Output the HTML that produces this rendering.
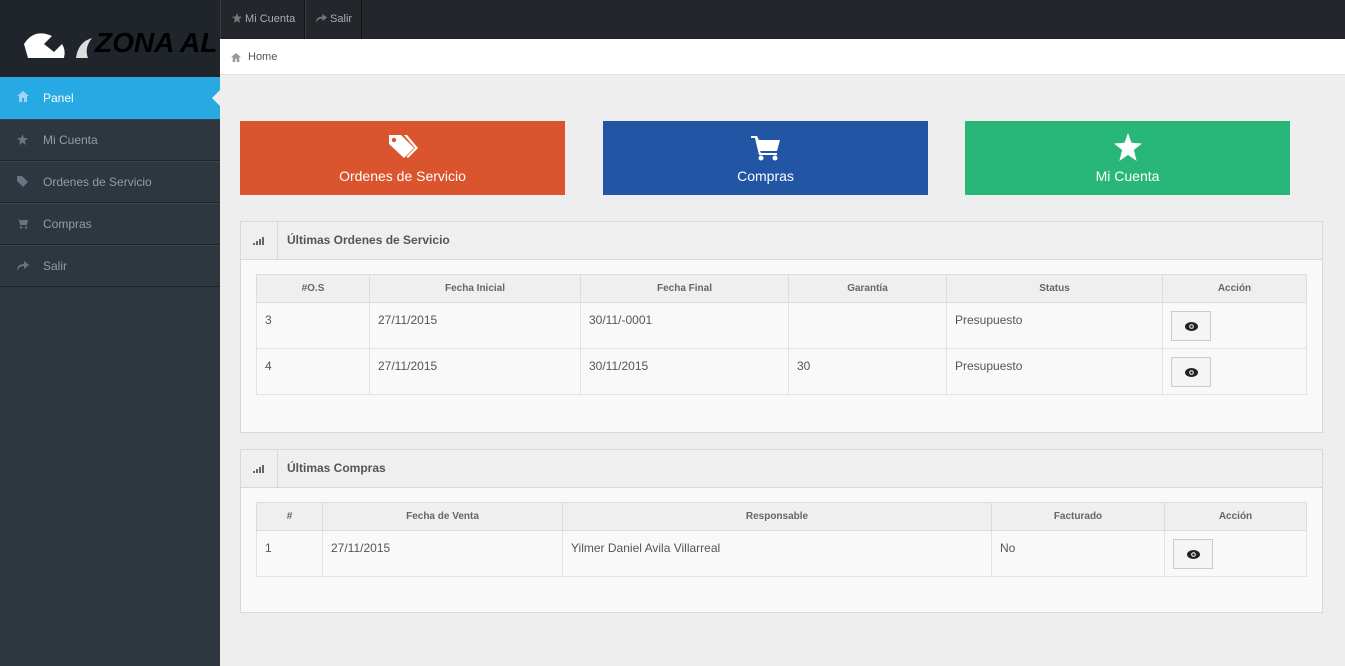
<!DOCTYPE html>
<html><head><meta charset="utf-8">
<style>
*{box-sizing:border-box;margin:0;padding:0}
body{width:1345px;height:666px;overflow:hidden;background:#eeeeee;font-family:"Liberation Sans",sans-serif;font-size:12px;color:#555;position:relative}
.abs{position:absolute}
#side{left:0;top:0;width:220px;height:666px;background:#2e363f}
#logo{left:0;top:0;width:220px;height:77px;background:#1f252b;overflow:hidden}
.nav{left:0;width:220px;height:42px;border-bottom:1px solid #1f252b;border-top:1px solid #3a434c;color:#939da8;font-size:12px;line-height:40px;padding-left:43px}
.nav svg{position:absolute;left:17px;top:14px}
#topbar{left:220px;top:0;width:1125px;height:39px;background:#23272c}
.tb{top:0;height:39px;line-height:38px;color:#aab;font-size:11px;border-right:1px solid #111;border-left:1px solid #3a3e44}
#crumb{left:220px;top:39px;width:1125px;height:36px;background:#fff;border-bottom:1px solid #e2e2e2;line-height:36px;padding-left:28px;font-size:11px;color:#555}
.tile{top:121px;width:325px;height:74px;color:#fff;font-size:14px;text-align:center}
.tile span{position:absolute;left:0;right:0;top:47px}
.tile svg{position:absolute;left:50%;top:12px;transform:translateX(-50%)}
.panel{left:240px;width:1083px;background:#f9f9f9;border:1px solid #d8d8d8}
.ph{height:38px;background:#efefef;border-bottom:1px solid #d8d8d8;position:relative;font-weight:bold;color:#555;font-size:12px;line-height:37px;padding-left:46px}
.ph i{position:absolute;left:0;top:0;width:37px;height:37px;border-right:1px solid #d8d8d8}
table{position:absolute;left:15px;border-collapse:collapse;background:#f9f9f9;font-size:12px}
th{height:28px;padding:0;background:#efefef;border:1px solid #ddd;font-size:10px;color:#666;font-weight:bold}
td{height:46px;border:1px solid #e2e2e2;vertical-align:top;padding:10px 8px 0;color:#555}
.btn{width:40px;height:30px;border:1px solid #ccc;background:#f5f5f5;margin-top:-2px;position:relative}
.btn svg{position:absolute;left:13px;top:10px}
</style></head><body>
<div id="side" class="abs"></div>
<div id="logo" class="abs">
<svg width="220" height="77" style="position:absolute;left:0;top:0">
<path d="M24 44 Q34 28 52 36 L44 44 L54 52 L62 44 Q66 50 64 58 L28 58 Z" fill="#fff"/>
<path d="M76 58 Q78 42 92 38 Q84 48 88 58 Z" fill="#ddd"/>
<text x="95" y="52" font-family="Liberation Sans" font-weight="bold" font-style="italic" font-size="28" fill="#000">ZONA AL</text>
</svg></div>
<div class="abs nav" style="top:77px;background:#27a9e3;color:#fff;border:none;line-height:42px">Panel
<svg width="12" height="11" viewBox="0 0 12 11"><path d="M6 0 L12 5 L10 5 L10 11 L7 11 L7 7 L5 7 L5 11 L2 11 L2 5 L0 5Z" fill="#9cd6f2"/></svg></div>
<div class="abs" style="left:212px;top:90px;width:0;height:0;border-top:8px solid transparent;border-bottom:8px solid transparent;border-right:8px solid #eee"></div>
<div class="abs nav" style="top:119px">Mi Cuenta<svg width="11" height="11" viewBox="0 0 12 12"><path d="M6 0 L7.5 4.2 L12 4.5 L8.5 7.3 L9.7 12 L6 9.4 L2.3 12 L3.5 7.3 L0 4.5 L4.5 4.2Z" fill="#6a7480"/></svg></div>
<div class="abs nav" style="top:161px">Ordenes de Servicio<svg width="12" height="11" viewBox="0 0 12 11"><path d="M0 0 L5 0 L11 6 L6 11 L0 5Z" fill="#6a7480"/></svg></div>
<div class="abs nav" style="top:203px">Compras<svg width="12" height="11" viewBox="0 0 12 11"><path d="M0 1 L2 1 L3 7 L10 7 L11 2 L3 2" fill="#6a7480"/><circle cx="4" cy="9.5" r="1.2" fill="#6a7480"/><circle cx="9" cy="9.5" r="1.2" fill="#6a7480"/></svg></div>
<div class="abs nav" style="top:245px">Salir<svg width="12" height="11" viewBox="0 0 12 11"><path d="M0 11 Q0 4 7 4 L7 1 L12 5 L7 9 L7 6 Q2 6 0 11Z" fill="#6a7480"/></svg></div>

<div id="topbar" class="abs"></div>
<div class="abs tb" style="left:220px;width:85px;padding-left:11px"><svg width="10" height="10" viewBox="0 0 12 12" style="vertical-align:-1px"><path d="M6 0 L7.5 4.2 L12 4.5 L8.5 7.3 L9.7 12 L6 9.4 L2.3 12 L3.5 7.3 L0 4.5 L4.5 4.2Z" fill="#777"/></svg> Mi Cuenta</div>
<div class="abs tb" style="left:305px;width:57px;padding-left:10px"><svg width="11" height="10" viewBox="0 0 12 11" style="vertical-align:-1px"><path d="M0 11 Q0 4 7 4 L7 1 L12 5 L7 9 L7 6 Q2 6 0 11Z" fill="#777"/></svg> Salir</div>
<div id="crumb" class="abs"><svg width="10" height="9" viewBox="0 0 12 11" style="position:absolute;left:11px;top:14px"><path d="M6 0 L12 5 L10 5 L10 11 L7 11 L7 7 L5 7 L5 11 L2 11 L2 5 L0 5Z" fill="#999"/></svg>Home</div>

<div class="abs tile" style="left:240px;background:#da542e"><svg width="32" height="28" viewBox="0 0 32 28"><path d="M2 2 L14 2 L27 15 L17 25 L2 11Z" fill="#fff"/><circle cx="7" cy="7" r="2.2" fill="#da542e"/><path d="M17 2 L20 2 L31 15 L21 25 L19.5 23.5 L28 15Z" fill="#fff"/></svg><span>Ordenes de Servicio</span></div>
<div class="abs tile" style="left:603px;background:#2255a4"><svg width="30" height="28" viewBox="0 0 30 28"><path d="M0 3 L6 3 L8 7 L29 7 L26 18 L9 18 L10 20 L26 20 L26 22 L8 22 L4 5 L0 5Z" fill="#fff"/><circle cx="10" cy="25" r="2.5" fill="#fff"/><circle cx="24" cy="25" r="2.5" fill="#fff"/></svg><span>Compras</span></div>
<div class="abs tile" style="left:965px;background:#28b779"><svg width="28" height="28" viewBox="0 0 12 12"><path d="M6 0 L7.5 4.2 L12 4.5 L8.5 7.3 L9.7 12 L6 9.4 L2.3 12 L3.5 7.3 L0 4.5 L4.5 4.2Z" fill="#fff"/></svg><span>Mi Cuenta</span></div>

<div class="abs panel" style="top:221px;height:212px">
<div class="ph"><i><svg width="12" height="8" style="position:absolute;left:12px;top:15px"><rect x="0" y="6" width="2" height="2" fill="#666"/><rect x="3" y="4" width="2" height="4" fill="#666"/><rect x="6" y="2" width="2" height="6" fill="#666"/><rect x="9" y="0" width="2" height="8" fill="#666"/></svg></i>Últimas Ordenes de Servicio</div>
<table style="top:52px;width:1051px">
<tr><th style="width:113px">#O.S</th><th style="width:211px">Fecha Inicial</th><th style="width:208px">Fecha Final</th><th style="width:158px">Garantía</th><th style="width:216px">Status</th><th>Acción</th></tr>
<tr><td>3</td><td>27/11/2015</td><td>30/11/-0001</td><td></td><td>Presupuesto</td><td><div class="btn"><svg width="13" height="9" viewBox="0 0 13 9"><ellipse cx="6.5" cy="4.5" rx="6.5" ry="4.5" fill="#222"/><circle cx="6.5" cy="4.5" r="2.3" fill="#fff"/><circle cx="6.5" cy="4.5" r="1.3" fill="#222"/></svg></div></td></tr>
<tr><td>4</td><td>27/11/2015</td><td>30/11/2015</td><td>30</td><td>Presupuesto</td><td><div class="btn"><svg width="13" height="9" viewBox="0 0 13 9"><ellipse cx="6.5" cy="4.5" rx="6.5" ry="4.5" fill="#222"/><circle cx="6.5" cy="4.5" r="2.3" fill="#fff"/><circle cx="6.5" cy="4.5" r="1.3" fill="#222"/></svg></div></td></tr>
</table></div>

<div class="abs panel" style="top:449px;height:164px">
<div class="ph"><i><svg width="12" height="8" style="position:absolute;left:12px;top:15px"><rect x="0" y="6" width="2" height="2" fill="#666"/><rect x="3" y="4" width="2" height="4" fill="#666"/><rect x="6" y="2" width="2" height="6" fill="#666"/><rect x="9" y="0" width="2" height="8" fill="#666"/></svg></i>Últimas Compras</div>
<table style="top:52px;width:1051px">
<tr><th style="width:66px">#</th><th style="width:240px">Fecha de Venta</th><th style="width:429px">Responsable</th><th style="width:173px">Facturado</th><th>Acción</th></tr>
<tr><td>1</td><td>27/11/2015</td><td>Yilmer Daniel Avila Villarreal</td><td>No</td><td><div class="btn"><svg width="13" height="9" viewBox="0 0 13 9"><ellipse cx="6.5" cy="4.5" rx="6.5" ry="4.5" fill="#222"/><circle cx="6.5" cy="4.5" r="2.3" fill="#fff"/><circle cx="6.5" cy="4.5" r="1.3" fill="#222"/></svg></div></td></tr>
</table></div>
</body></html>
